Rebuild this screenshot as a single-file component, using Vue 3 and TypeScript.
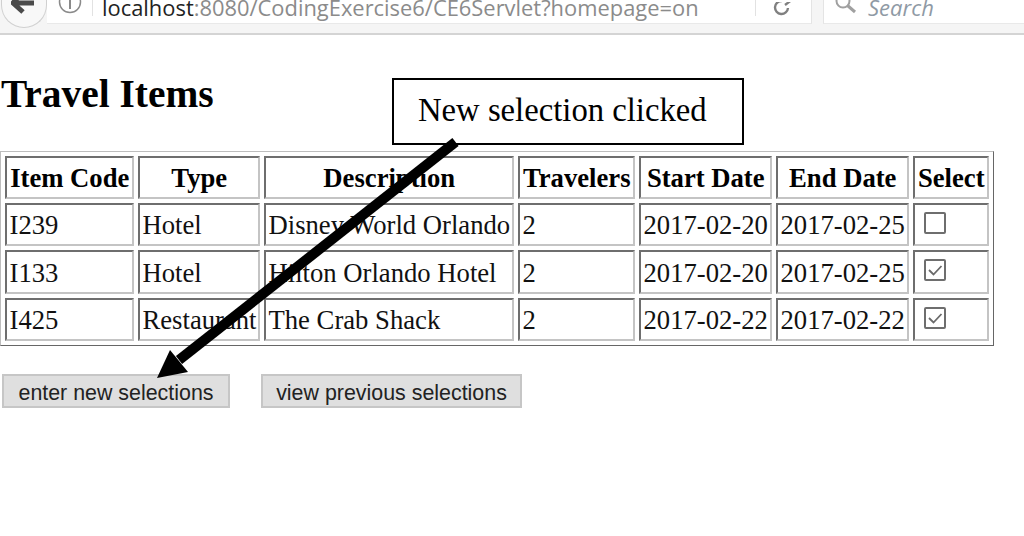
<script setup lang="ts">
interface Row { code: string; type: string; desc: string; travelers: string; start: string; end: string; selected: boolean }
const headers = ['Item Code', 'Type', 'Description', 'Travelers', 'Start Date', 'End Date', 'Select']
const rows: Row[] = [
  { code: 'I239', type: 'Hotel', desc: 'Disney World Orlando', travelers: '2', start: '2017-02-20', end: '2017-02-25', selected: false },
  { code: 'I133', type: 'Hotel', desc: 'Hilton Orlando Hotel', travelers: '2', start: '2017-02-20', end: '2017-02-25', selected: true },
  { code: 'I425', type: 'Restaurant', desc: 'The Crab Shack', travelers: '2', start: '2017-02-22', end: '2017-02-22', selected: true }
]
</script>

<template>
  <div class="page">
    <header class="chrome">
      <div class="back">
        <svg width="26" height="16" viewBox="0 0 26 16"><path d="M9 -5 L2 3 L12 12 M3 3 H23" fill="none" stroke="#4a4a4a" stroke-width="5" /></svg>
      </div>
      <div class="urlbar">
        <svg class="info" width="24" height="16" viewBox="0 0 24 16">
          <circle cx="12" cy="2" r="10.5" fill="none" stroke="#8a8a8a" stroke-width="1.5" />
          <path d="M12 0 V9" stroke="#8a8a8a" stroke-width="2" />
        </svg>
        <span class="divider"></span>
        <span class="url"><span class="host">localhost</span>:8080/CodingExercise6/CE6Servlet?homepage=on</span>
        <span class="reload">
          <svg width="20" height="14" viewBox="0 0 20 14"><path d="M16 6 A6.5 6.5 0 1 1 10 -1 M12 -4 L17 0 L13 3" fill="none" stroke="#808080" stroke-width="2.4" /></svg>
        </span>
      </div>
      <div class="search">
        <svg width="24" height="16" viewBox="0 0 24 16"><circle cx="9" cy="1" r="6.5" fill="none" stroke="#a0a0a0" stroke-width="2" /><path d="M13.5 5.5 L21 12" stroke="#a0a0a0" stroke-width="3" /></svg>
        <span class="search-text">Search</span>
      </div>
    </header>

    <main class="content">
      <h1 class="title">Travel Items</h1>
      <table class="items">
        <thead>
          <tr><th v-for="h in headers" :key="h">{{ h }}</th></tr>
        </thead>
        <tbody>
          <tr v-for="r in rows" :key="r.code">
            <td>{{ r.code }}</td>
            <td>{{ r.type }}</td>
            <td>{{ r.desc }}</td>
            <td>{{ r.travelers }}</td>
            <td>{{ r.start }}</td>
            <td>{{ r.end }}</td>
            <td class="check-cell">
              <span class="check">
                <svg v-if="r.selected" width="18" height="18" viewBox="0 0 18 18"><path d="M3 9 L7.5 13.5 L15.5 5" fill="none" stroke="#6a6a6a" stroke-width="1.8" /></svg>
              </span>
            </td>
          </tr>
        </tbody>
      </table>
      <div class="actions">
        <button class="btn first" type="button">enter new selections</button>
        <button class="btn second" type="button">view previous selections</button>
      </div>
    </main>

    <div class="callout">New selection clicked</div>
    <svg class="arrow" width="1024" height="536" viewBox="0 0 1024 536">
      <path d="M455.5 142 L179 360" stroke="#000" stroke-width="10" fill="none" />
      <path d="M157 378 L170 350 L188 372 Z" fill="#000" />
    </svg>
  </div>
</template>

<style>
html, body { margin: 0; background: #fff; }
</style>

<style scoped>
.page {
  position: relative;
  width: 1024px;
  height: 536px;
  overflow: hidden;
  background: #fff;
  font-family: "Liberation Serif", serif;
  color: #111;
}
.chrome {
  display: flex;
  align-items: flex-start;
  height: 33px;
  background: #f5f5f5;
  border-bottom: 2px solid #d4d4d4;
  overflow: hidden;
}
.back {
  width: 46px;
  height: 28px;
  margin-left: 1px;
  background: #f8f8f8;
  border: 1px solid #d0d0d0;
  border-top: none;
  border-radius: 0 0 23px 23px;
  display: flex;
  justify-content: center;
  box-sizing: border-box;
  flex: none;
}
.urlbar {
  display: flex;
  align-items: flex-start;
  width: 765px;
  height: 24px;
  box-sizing: border-box;
  background: #fff;
  border-right: 1px solid #e4e4e4;
  border-bottom: 1px solid #e9e9e9;
  flex: none;
  font-family: "Open Sans", "Noto Sans", sans-serif;
  font-size: 21.9px;
  line-height: 16px;
  color: #8b8b8b;
}
.info { margin-left: 11px; flex: none; }
.divider {
  width: 1px;
  height: 16px;
  background: #e2e2e2;
  margin-left: 10px;
  flex: none;
}
.url { display: block; white-space: nowrap; padding-left: 9px; width: 662px; flex: none; box-sizing: border-box; }
.host { color: #222; }
.reload {
  display: block;
  width: 54px;
  height: 16px;
  border-left: 1px solid #e2e2e2;
  padding-left: 16px;
  box-sizing: border-box;
}
.search {
  display: flex;
  align-items: flex-start;
  height: 24px;
  margin-left: 11px;
  background: #fff;
  border-left: 1px solid #e4e4e4;
  border-bottom: 1px solid #e9e9e9;
  box-sizing: border-box;
  padding-left: 10px;
  flex: 1;
}
.search-text {
  margin-left: 10px;
  font-family: "Open Sans", "Noto Sans", sans-serif;
  font-style: italic;
  font-size: 22px;
  line-height: 14px;
  color: #8f9aa5;
}
.title {
  margin: 37px 0 0 1px;
  font-size: 39.4px;
  line-height: 45px;
  font-weight: 700;
  color: #000;
}
.items {
  margin-top: 34px;
  width: 994px;
  table-layout: fixed;
  border-collapse: separate;
  border-spacing: 4px;
  border: 1px solid;
  border-color: #bdbdbd #666 #666 #bdbdbd;
  box-sizing: border-box;
  font-size: 26.67px;
}
th, td {
  border: 2px solid;
  border-color: #6e6e6e #c4c4c4 #c4c4c4 #6e6e6e;
  height: 43px;
  padding: 2px 2px 0 2.5px;
  box-sizing: border-box;
  white-space: nowrap;
  overflow: visible;
}
tbody tr:nth-child(2) td { height: 44px; }
th:nth-child(1) { width: 129px; }
th:nth-child(2) { width: 122px; }
th:nth-child(3) { width: 250px; }
th:nth-child(4) { width: 117px; }
th:nth-child(5) { width: 133px; }
th:nth-child(6) { width: 133px; }
th:nth-child(7) { width: 76px; }
th { font-weight: 700; text-align: center; color: #000; }
td { text-align: left; }
.check-cell { padding: 0 0 4px 9px; }
.check {
  display: block;
  width: 22px;
  height: 22px;
  border: 2px solid #6e6e6e;
  border-radius: 2px;
  box-sizing: border-box;
}
.check svg { display: block; }
.actions {
  display: flex;
  gap: 31px;
  margin: 28px 0 0 2px;
}
.btn {
  height: 34px;
  padding: 4px 0 0;
  background: #dfdfdf;
  border: 2px solid #c6c6c6;
  border-radius: 0;
  font-family: "Liberation Sans", sans-serif;
  font-size: 21.4px;
  color: #222;
  text-align: center;
}
.first { width: 228px; }
.second { width: 261px; }
.callout {
  position: absolute;
  left: 392px;
  top: 78px;
  width: 352px;
  height: 67px;
  box-sizing: border-box;
  border: 2px solid #000;
  background: #fff;
  padding-left: 24px;
  font-size: 32.7px;
  line-height: 60px;
  color: #000;
  white-space: nowrap;
}
.arrow { position: absolute; left: 0; top: 0; pointer-events: none; }
</style>
